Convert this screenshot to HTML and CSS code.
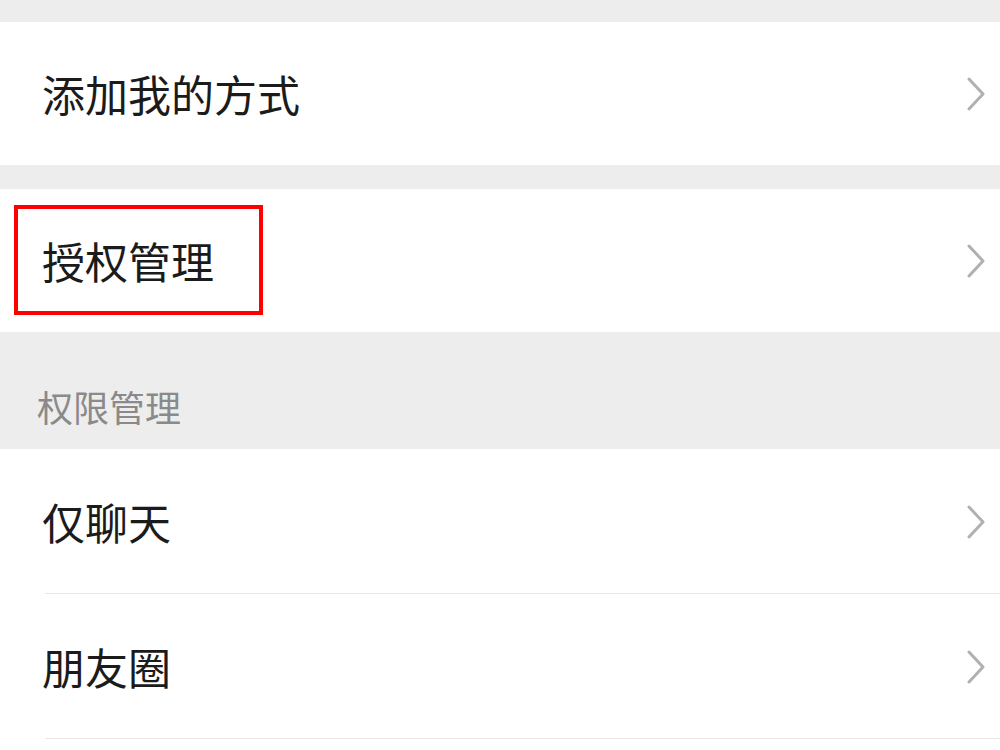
FILE: index.html
```html
<!DOCTYPE html>
<html>

<head>
    <meta name="viewport" content="width=device-width, initial-scale=1">
    <link rel="icon" href="data:,">
    <link rel="stylesheet" href="styles.css">
</head>

<body>
    <div class="spacer top"></div>

    <div class="group">
        <div class="cell">
            <span class="label">添加我的方式</span>
            <svg class="arrow" width="18" height="34" viewBox="0 0 18 34"><polyline points="2,2 16,17 2,32" /></svg>
        </div>
    </div>

    <div class="spacer"></div>

    <div class="group">
        <div class="cell marked">
            <span class="label">授权管理</span>
            <svg class="arrow" width="18" height="34" viewBox="0 0 18 34"><polyline points="2,2 16,17 2,32" /></svg>
            <!-- 红框标注 -->
            <div class="highlight"></div>
        </div>
    </div>

    <div class="section-title">权限管理</div>

    <div class="group">
        <div class="cell line">
            <span class="label">仅聊天</span>
            <svg class="arrow" width="18" height="34" viewBox="0 0 18 34"><polyline points="2,2 16,17 2,32" /></svg>
        </div>
        <div class="cell line">
            <span class="label">朋友圈</span>
            <svg class="arrow" width="18" height="34" viewBox="0 0 18 34"><polyline points="2,2 16,17 2,32" /></svg>
        </div>
        <div class="cell short"></div>
    </div>
</body>

</html>
```

FILE: styles.css
```css
/* 设置页列表样式 */
body {
    margin: 0;
    background-color: #ededed;
    font-family: "Noto Sans CJK SC", "Noto Sans", sans-serif;
    color: #1b1b1b;
}

.spacer {
    height: 24px;
}

.spacer.top {
    height: 22px;
}

.group {
    background-color: #fff;
}

.cell {
    height: 143px;
    display: flex;
    align-items: center;
    justify-content: space-between;
    padding: 0 15px 0 42px;
    box-sizing: border-box;
}

.cell.line {
    height: 145px;
    padding-top: 1px;
    border-bottom: 1px solid #e6e6e6;
    margin-left: 45px;
    padding-left: 0;
}

.cell.line .label {
    margin-left: -3px;
}

.cell.short {
    height: 12px;
}

.label {
    font-size: 43px;
    line-height: 1;
}

.arrow polyline {
    fill: none;
    stroke: #b0b0b0;
    stroke-width: 3;
    stroke-linecap: round;
    stroke-linejoin: round;
}

.marked {
    position: relative;
}

.highlight {
    position: absolute;
    left: 14px;
    top: 16px;
    width: 249px;
    height: 110px;
    border: 4px solid #f00;
    box-sizing: border-box;
}

.section-title {
    height: 117px;
    box-sizing: border-box;
    padding: 56px 0 0 37px;
    font-size: 36px;
    line-height: 1;
    color: #8a8a8a;
}
```
